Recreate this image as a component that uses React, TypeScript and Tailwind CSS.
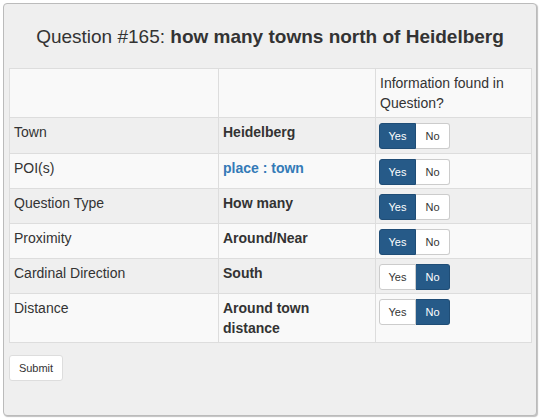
import React from "react";

type Row = { label: string; value: React.ReactNode; yes: boolean };

const rows: Row[] = [
  { label: "Town", value: <span className="font-bold">Heidelberg</span>, yes: true },
  { label: "POI(s)", value: <span className="font-bold text-[#337ab7]">place : town</span>, yes: true },
  { label: "Question Type", value: <span className="font-bold">How many</span>, yes: true },
  { label: "Proximity", value: <span className="font-bold">Around/Near</span>, yes: true },
  { label: "Cardinal Direction", value: <span className="font-bold">South</span>, yes: false },
  { label: "Distance", value: <span className="font-bold inline-block max-w-[130px]">Around town distance</span>, yes: false },
];

function Toggle({ yes }: { yes: boolean }) {
  const on = "bg-[#265a88] border-[#1f4d76] text-white";
  const off = "bg-white border-[#ccc] text-[#333]";
  return (
    <div className="flex text-[11px] leading-[17px] -ml-px mt-px">
      <span className={`w-[37px] h-[26px] flex items-center justify-center border rounded-l-[3px] ${yes ? on : off}`}>Yes</span>
      <span className={`w-[34px] h-[26px] flex items-center justify-center border border-l-0 rounded-r-[3px] ${yes ? off : on}`}>No</span>
    </div>
  );
}

export default function App() {
  return (
    <div className="p-[3px] font-['Liberation_Sans',Arial,sans-serif] text-[#333] text-[14px] leading-[20px]">
      <div className="border border-[#bbb] rounded-[4px] bg-[#efefef] shadow-[1px_1px_1px_rgba(0,0,0,0.25)] px-[5px] pb-[34px]">
        <div className="h-[64px] flex items-center justify-center pt-[2px] text-[19px] leading-[22px]">
          <span>Question #165:&nbsp;</span>
          <span className="font-bold">how many towns north of Heidelberg</span>
        </div>
        <table className="w-[522px] table-fixed border-collapse">
          <colgroup>
            <col className="w-[209px]" />
            <col className="w-[157px]" />
            <col className="w-[156px]" />
          </colgroup>
          <thead>
            <tr className="bg-[#f9f9f9]">
              <th className="border border-[#ddd] px-[4px] py-[4px] text-left font-normal align-top h-[49px]"></th>
              <th className="border border-[#ddd] px-[4px] py-[4px] text-left font-normal align-top"></th>
              <th className="border border-[#ddd] px-[4px] py-[4px] text-left font-normal align-top">
                Information found in Question?
              </th>
            </tr>
          </thead>
          <tbody>
            {rows.map((r, i) => {
              const pad = i === 0 || i === rows.length - 1 ? "pb-[4px]" : "pb-[3px]";
              return (
                <tr key={r.label} className={i % 2 === 0 ? "bg-[#efefef]" : "bg-[#f9f9f9]"}>
                  <td className={`border border-[#ddd] px-[4px] pt-[4px] ${pad} align-top`}>{r.label}</td>
                  <td className={`border border-[#ddd] px-[4px] pt-[4px] ${pad} align-top`}>{r.value}</td>
                  <td className={`border border-[#ddd] px-[4px] pt-[4px] ${pad} align-top`}>
                    <Toggle yes={r.yes} />
                  </td>
                </tr>
              );
            })}
          </tbody>
        </table>
        <div className="mt-[12px]">
          <button className="w-[54px] h-[26px] bg-white border border-[#ddd] rounded-[3px] text-[11px] text-[#333] flex items-center justify-center">
            Submit
          </button>
        </div>
      </div>
    </div>
  );
}
